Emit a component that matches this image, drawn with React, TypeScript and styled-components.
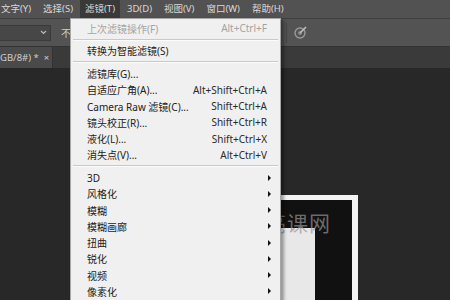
import React from 'react';
import styled, { createGlobalStyle } from 'styled-components';

interface MenuEntry {
  label?: string;
  shortcut?: string;
  disabled?: boolean;
  submenu?: boolean;
  separator?: boolean;
}

const GlobalStyle = createGlobalStyle`
  html, body {
    margin: 0;
    padding: 0;
    background: #282828;
  }
  body {
    font-family: "Noto Sans", "Noto Sans CJK SC", sans-serif;
  }
`;

const Page = styled.div`
  position: relative;
  width: 450px;
  height: 300px;
  overflow: hidden;
  display: flex;
  flex-direction: column;
  background: #282828;
`;

const MenuBar = styled.div`
  height: 18px;
  background: #525252;
  display: flex;
  align-items: center;
  margin-left: -4px;
  flex-shrink: 0;
`;

const BarItem = styled.div<{ $active?: boolean }>`
  height: 18px;
  line-height: 18px;
  padding: 0 5px;
  margin-right: 2px;
  font-size: 9.5px;
  color: #d8d8d8;
  white-space: nowrap;
  background: ${(p) => (p.$active ? '#393939' : 'transparent')};
`;

const OptionsBar = styled.div`
  height: 27px;
  background: #535353;
  border-top: 1px solid #3f3f3f;
  border-bottom: 1px solid #333;
  display: flex;
  align-items: center;
  flex-shrink: 0;
`;

const Dropdown = styled.div`
  width: 52px;
  height: 16px;
  margin-left: -1px;
  background: #474747;
  border: 1px solid #3a3a3a;
  display: flex;
  align-items: center;
  justify-content: flex-end;
  padding-right: 3px;
  box-sizing: border-box;
`;

const OptionLabel = styled.span`
  margin-left: 10px;
  font-size: 10px;
  color: #cfcfcf;
`;

const OptionSep = styled.div`
  width: 1px;
  height: 20px;
  background: #444;
  margin-left: 215px;
`;

const OptionIcon = styled.div`
  margin-left: 6px;
  width: 14px;
  height: 14px;
  display: flex;
`;

const TabBar = styled.div`
  height: 21px;
  background: #3a3a3a;
  display: flex;
  flex-shrink: 0;
`;

const Tab = styled.div`
  width: 53px;
  background: #4a4a4a;
  border-right: 1px solid #333;
  display: flex;
  align-items: center;
  box-sizing: border-box;
  font-size: 9.5px;
  color: #cfcfcf;
  white-space: nowrap;
  gap: 5px;
`;

const Workspace = styled.div`
  flex: 1;
  background: #282828;
  padding-top: 127px;
  padding-left: 270px;
`;

const DocFrame = styled.div`
  position: relative;
  width: 82px;
  height: 120px;
  background: #111;
  border-top: 5px solid #f4f4f4;
  border-right: 6px solid #f4f4f4;
`;

const DocStrip = styled.div`
  margin-top: 28px;
  width: 45px;
  height: 100px;
  background: #e8e8e8;
`;

const Watermark = styled.div`
  position: absolute;
  left: -5px;
  top: 7px;
  font-size: 21px;
  color: rgba(150, 150, 150, 0.7);
  font-family: "Noto Sans CJK SC", sans-serif;
  white-space: nowrap;
  letter-spacing: 1px;
`;

const FilterMenu = styled.div`
  position: absolute;
  left: 70px;
  top: 18px;
  width: 211px;
  height: 300px;
  background: #f0f0f0;
  border: 1px solid #a7a7a7;
  box-sizing: border-box;
  box-shadow: 3px 2px 3px rgba(0, 0, 0, 0.35);
  padding-top: 1px;
`;

const Row = styled.div<{ $disabled?: boolean }>`
  height: 16.25px;
  display: flex;
  align-items: center;
  padding-left: 16px;
  padding-right: 13px;
  font-size: 10px;
  color: ${(p) => (p.$disabled ? '#a3a3a3' : '#222')};
  white-space: nowrap;
`;

const RowLabel = styled.span`
  flex: 1;
`;

const Shortcut = styled.span<{ $disabled?: boolean }>`
  color: ${(p) => (p.$disabled ? '#a3a3a3' : '#2a2a2a')};
`;

const Arrow = styled.span`
  width: 0;
  height: 0;
  margin-right: -4px;
  border-top: 3px solid transparent;
  border-bottom: 3px solid transparent;
  border-left: 3.5px solid #111;
`;

const Separator = styled.div`
  height: 6.5px;
  display: flex;
  align-items: center;
  padding: 0 2px;
  &::after {
    content: '';
    flex: 1;
    height: 1px;
    background: #c9c9c9;
    border-bottom: 1px solid #fbfbfb;
  }
`;

const barItems = ['文字(Y)', '选择(S)', '滤镜(T)', '3D(D)', '视图(V)', '窗口(W)', '帮助(H)'];

const entries: MenuEntry[] = [
  { label: '上次滤镜操作(F)', shortcut: 'Alt+Ctrl+F', disabled: true },
  { separator: true },
  { label: '转换为智能滤镜(S)' },
  { separator: true },
  { label: '滤镜库(G)...' },
  { label: '自适应广角(A)...', shortcut: 'Alt+Shift+Ctrl+A' },
  { label: 'Camera Raw 滤镜(C)...', shortcut: 'Shift+Ctrl+A' },
  { label: '镜头校正(R)...', shortcut: 'Shift+Ctrl+R' },
  { label: '液化(L)...', shortcut: 'Shift+Ctrl+X' },
  { label: '消失点(V)...', shortcut: 'Alt+Ctrl+V' },
  { separator: true },
  { label: '3D', submenu: true },
  { label: '风格化', submenu: true },
  { label: '模糊', submenu: true },
  { label: '模糊画廊', submenu: true },
  { label: '扭曲', submenu: true },
  { label: '锐化', submenu: true },
  { label: '视频', submenu: true },
  { label: '像素化', submenu: true },
];

const App: React.FC = () => {
  return (
    <Page>
      <GlobalStyle />
      <MenuBar>
        {barItems.map((item) => (
          <BarItem key={item} $active={item === '滤镜(T)'}>
            {item}
          </BarItem>
        ))}
      </MenuBar>
      <OptionsBar>
        <Dropdown>
          <svg width="7" height="5" viewBox="0 0 7 5">
            <path d="M1 1 L3.5 3.5 L6 1" stroke="#bbb" strokeWidth="1.2" fill="none" />
          </svg>
        </Dropdown>
        <OptionLabel>不</OptionLabel>
        <OptionSep />
        <OptionIcon>
          <svg width="14" height="14" viewBox="0 0 14 14">
            <circle cx="7" cy="7" r="5" stroke="#9a9a9a" strokeWidth="1.4" fill="none" />
            <circle cx="7" cy="7" r="2" fill="#8a8a8a" />
            <path d="M7 7 L13 1" stroke="#bdbdbd" strokeWidth="1.6" />
          </svg>
        </OptionIcon>
      </OptionsBar>
      <TabBar>
        <Tab>
          <span>GB/8#) *</span>
          <span>×</span>
        </Tab>
      </TabBar>
      <Workspace>
        <DocFrame>
          <DocStrip />
          <Watermark>亮课网</Watermark>
        </DocFrame>
      </Workspace>

      <FilterMenu>
        {entries.map((entry, index) =>
          entry.separator ? (
            <Separator key={index} />
          ) : (
            <Row key={index} $disabled={entry.disabled}>
              <RowLabel>{entry.label}</RowLabel>
              {entry.shortcut && <Shortcut $disabled={entry.disabled}>{entry.shortcut}</Shortcut>}
              {entry.submenu && <Arrow />}
            </Row>
          )
        )}
      </FilterMenu>
    </Page>
  );
};

export default App;
